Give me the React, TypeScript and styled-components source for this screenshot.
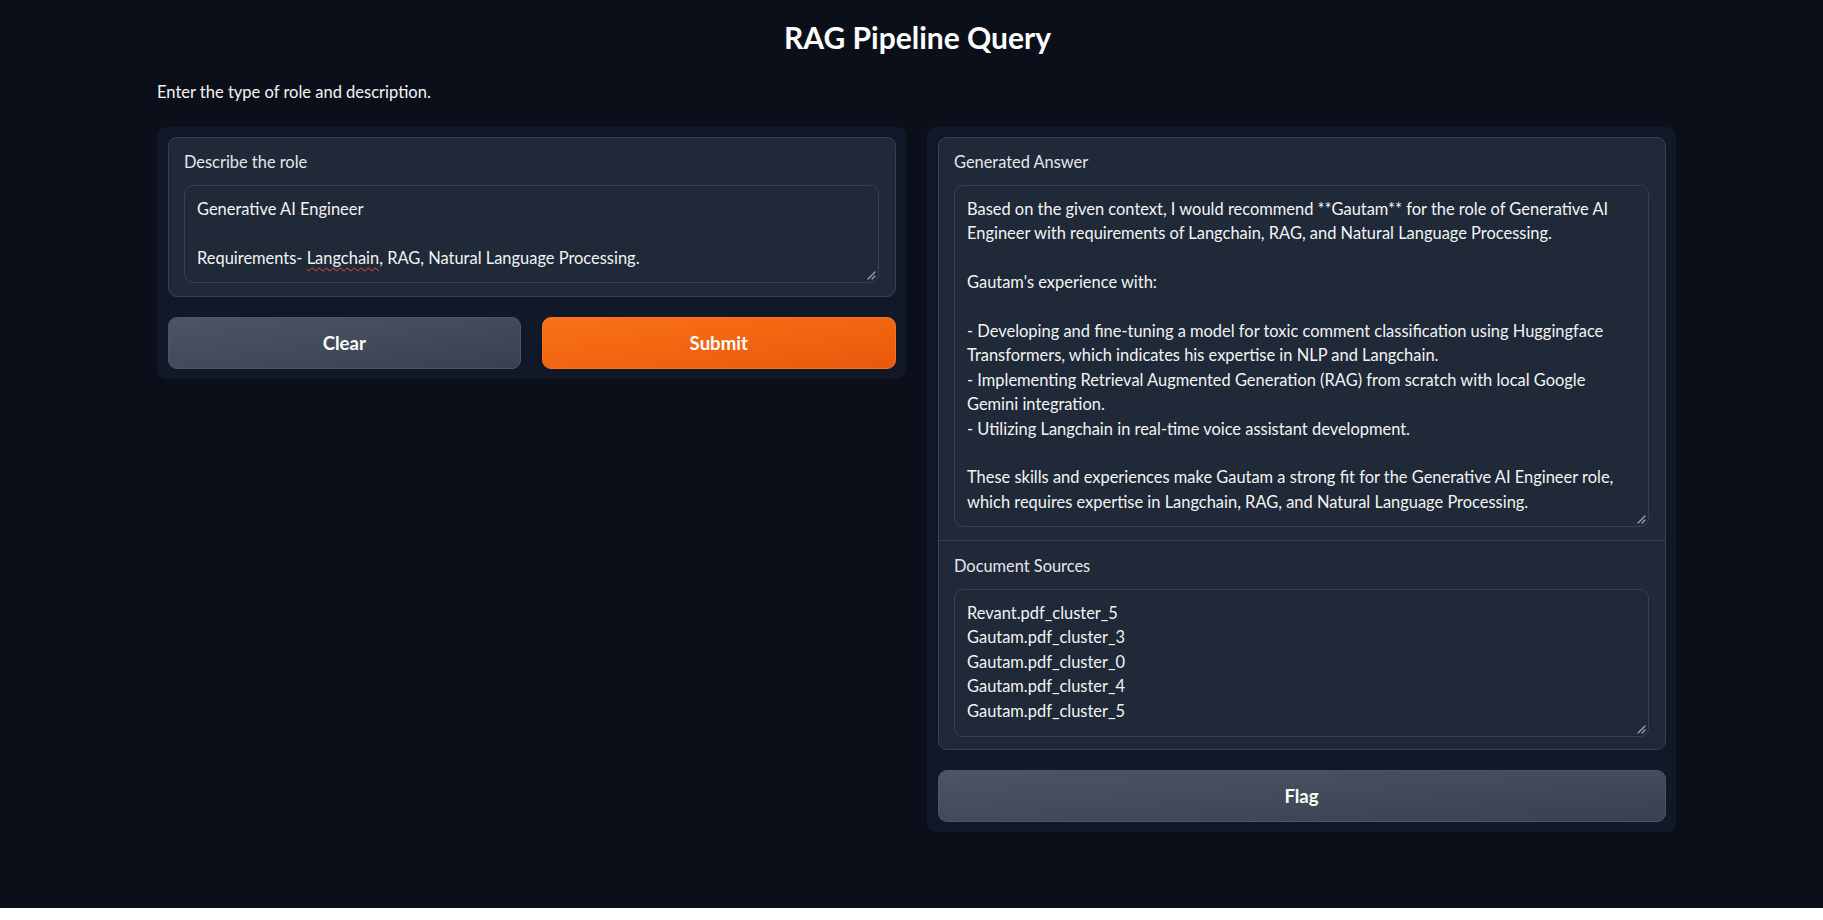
import React from "react";
import styled, { createGlobalStyle } from "styled-components";

const FONT = `"Lato", "Noto Sans", sans-serif`;

const Global = createGlobalStyle`
  html, body { margin: 0; padding: 0; background: #ffffff; }
  body { font-family: ${FONT}; }
  * { box-sizing: border-box; }
`;

const Page = styled.div`
  height: 908px;
  background: #0b0f19;
  color: #f3f4f6;
  padding-top: 16px;
`;

const Title = styled.h1`
  margin: 0;
  text-align: center;
  font-size: 30px;
  line-height: 42px;
  font-weight: 700;
  color: #ffffff;
  padding-left: 12px;
`;

const Description = styled.p`
  margin: 22px 0 0 157px;
  font-size: 16.5px;
  line-height: 24px;
  color: #f3f4f6;
`;

const Row = styled.div`
  display: flex;
  gap: 21px;
  width: 1519px;
  margin: 23px 0 0 157px;
  align-items: flex-start;
`;

const Panel = styled.div`
  flex: 1 1 0;
  background: #111827;
  border-radius: 9px;
  padding: 10px 10.5px;
  display: flex;
  flex-direction: column;
  gap: 20px;
`;

const Block = styled.div`
  background: #1f2937;
  border: 1px solid #374151;
  border-radius: 9px;
  overflow: hidden;
`;

const Field = styled.div<{ $divided?: boolean }>`
  padding: ${(p) => (p.$divided ? "15px 15.5px 12px" : "14px 15.5px 13px")};
  border-top: ${(p) => (p.$divided ? "1px solid #374151" : "none")};
`;

const Label = styled.div`
  font-size: 16.4px;
  line-height: 20px;
  color: #e5e7eb;
  margin-bottom: 13px;
`;

const TextBox = styled.div<{ $h: number }>`
  position: relative;
  height: ${(p) => p.$h}px;
  background: #1f2937;
  border: 1px solid #374151;
  border-radius: 9px;
  padding: 11px 12px 10px;
  font-size: 16.45px;
  line-height: 24.4px;
  white-space: pre-wrap;
  color: #f3f4f6;
  overflow: hidden;
`;

const Misspelled = styled.span`
  text-decoration: underline wavy #ef4444;
  text-decoration-thickness: 1px;
  text-underline-offset: 3px;
`;

const Grip = styled.svg`
  position: absolute;
  right: 2px;
  bottom: 2px;
  width: 10px;
  height: 10px;
`;

const ButtonRow = styled.div`
  display: flex;
  gap: 21px;
  & > * {
    flex: 1 1 0;
  }
`;

const Button = styled.button<{ $primary?: boolean }>`
  display: block;
  width: 100%;
  height: 52px;
  border-radius: 9px;
  border: 1px solid ${(p) => (p.$primary ? "#f97316" : "#4b5563")};
  background: ${(p) =>
    p.$primary
      ? "linear-gradient(to bottom right, #f97316, #ea580c)"
      : "linear-gradient(to bottom right, #4b5563, #374151)"};
  color: #ffffff;
  font-family: ${FONT};
  font-size: 18.6px;
  font-weight: 700;
  cursor: pointer;
`;

function ResizeGrip() {
  return (
    <Grip viewBox="0 0 10 10">
      <path d="M9 2 L2 9 M9 6 L6 9" stroke="#9ca3af" strokeWidth="1.3" strokeLinecap="round" />
    </Grip>
  );
}

const ANSWER = `Based on the given context, I would recommend **Gautam** for the role of Generative AI Engineer with requirements of Langchain, RAG, and Natural Language Processing.

Gautam's experience with:

- Developing and fine-tuning a model for toxic comment classification using Huggingface Transformers, which indicates his expertise in NLP and Langchain.
- Implementing Retrieval Augmented Generation (RAG) from scratch with local Google Gemini integration.
- Utilizing Langchain in real-time voice assistant development.

These skills and experiences make Gautam a strong fit for the Generative AI Engineer role, which requires expertise in Langchain, RAG, and Natural Language Processing.`;

const SOURCES = `Revant.pdf_cluster_5
Gautam.pdf_cluster_3
Gautam.pdf_cluster_0
Gautam.pdf_cluster_4
Gautam.pdf_cluster_5`;

export default function App() {
  return (
    <>
      <Global />
      <Page>
        <Title>RAG Pipeline Query</Title>
        <Description>Enter the type of role and description.</Description>
        <Row>
          <Panel>
            <Block>
              <Field>
                <Label>Describe the role</Label>
                <TextBox $h={98}>
                  {"Generative AI Engineer\n\nRequirements- "}
                  <Misspelled>Langchain</Misspelled>
                  {", RAG, Natural Language Processing."}
                  <ResizeGrip />
                </TextBox>
              </Field>
            </Block>
            <ButtonRow>
              <Button>Clear</Button>
              <Button $primary>Submit</Button>
            </ButtonRow>
          </Panel>
          <Panel>
            <Block>
              <Field>
                <Label>Generated Answer</Label>
                <TextBox $h={342}>
                  {ANSWER}
                  <ResizeGrip />
                </TextBox>
              </Field>
              <Field $divided>
                <Label>Document Sources</Label>
                <TextBox $h={148}>
                  {SOURCES}
                  <ResizeGrip />
                </TextBox>
              </Field>
            </Block>
            <Button>Flag</Button>
          </Panel>
        </Row>
      </Page>
    </>
  );
}
